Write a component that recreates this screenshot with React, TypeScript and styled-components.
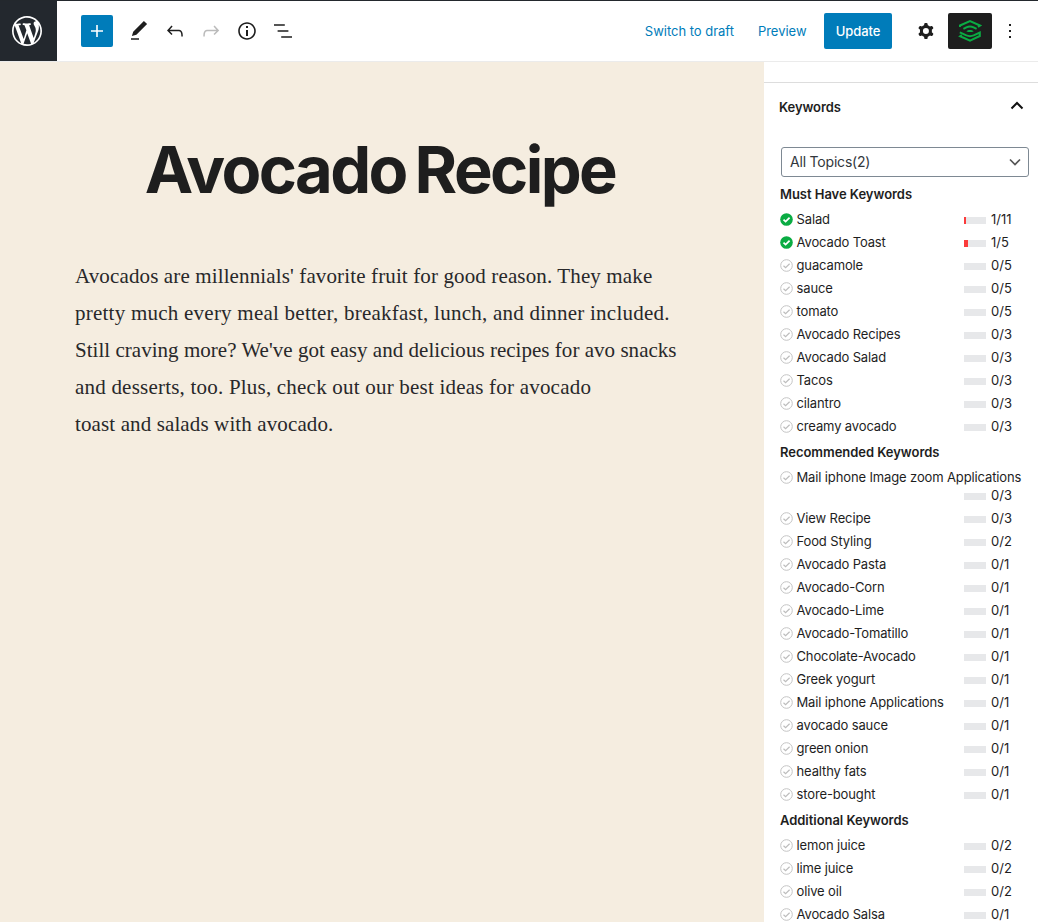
import React from "react";
import styled, { createGlobalStyle } from "styled-components";

const GlobalStyle = createGlobalStyle`
  * { box-sizing: border-box; }
  body { margin: 0; background: #fff; color: #1e1e1e; font-family: Inter, "Liberation Sans", sans-serif; font-size: 13px; }
  button { font: inherit; border: 0; background: none; padding: 0; margin: 0; color: inherit; }
  svg { display: block; flex: none; }
`;

const Shell = styled.div`
  width: 1038px;
  height: 922px;
  overflow: hidden;
  display: flex;
  flex-direction: column;
`;

const TopBar = styled.header`
  height: 62px;
  flex: none;
  display: flex;
  border-top: 1px solid #23282d;
  border-bottom: 1px solid #ebebeb;
`;

const HomeLink = styled.div`
  width: 57px;
  height: 60px;
  background: #23282e;
  padding: 12px 0 0 9px;
  color: #fff;
`;

const Tools = styled.div`
  display: flex;
  align-items: center;
  padding-left: 24px;
  gap: 12px;
`;

const AddButton = styled.button`
  width: 32px;
  height: 32px;
  display: grid;
  place-items: center;
  background: #007cba;
  color: #fff;
  border-radius: 2px;
  margin-right: 2px;
`;

const ToolButton = styled.button<{ $muted?: boolean }>`
  width: 24px;
  height: 24px;
  color: ${(p) => (p.$muted ? "#bbb" : "#1e1e1e")};
`;

const Actions = styled.div`
  margin-left: auto;
  display: flex;
  align-items: center;
  padding-right: 16px;
`;

const TextAction = styled.button<{ $gap: number }>`
  color: #007cba;
  line-height: 20px;
  white-space: nowrap;
  letter-spacing: -0.02px;
  margin-right: ${(p) => p.$gap}px;
`;

const UpdateButton = styled.button`
  width: 68px;
  height: 36px;
  border-radius: 2px;
  background: #007cba;
  color: #fff;
  font-weight: 500;
  letter-spacing: -0.05px;
  margin-right: 22px;
`;

const PluginButton = styled.button`
  width: 44px;
  height: 36px;
  margin: 0 6px 0 10px;
  border-radius: 2px;
  background: #1e1e1e;
  display: grid;
  place-items: center;
`;

const Body = styled.div`
  flex: 1;
  min-height: 0;
  display: flex;
`;

const Canvas = styled.main`
  width: 764px;
  background: #f5ede0;
  padding: 69px 75px 0;
`;

const Title = styled.h1`
  margin: 0 0 50px;
  padding-right: 4px;
  height: 77px;
  font-size: 65px;
  line-height: 77px;
  font-weight: 700;
  letter-spacing: -2.6px;
  word-spacing: -4px;
  text-align: center;
  white-space: nowrap;
`;

const Paragraph = styled.p`
  margin: 0;
  font-family: "Liberation Serif", serif;
  font-size: 21px;
  line-height: 37px;
  color: #28282a;
`;

const Line = styled.span<{ $spacing: number }>`
  display: block;
  white-space: nowrap;
  letter-spacing: ${(p) => p.$spacing}px;
`;

const Sidebar = styled.aside`
  width: 274px;
  overflow: hidden;
  padding-top: 20px;
`;

const PanelHeader = styled.div`
  height: 49px;
  border-top: 1px solid #ddd;
  display: flex;
  align-items: center;
  justify-content: space-between;
  padding: 0 14px 0 15px;
  font-weight: 600;
  letter-spacing: -0.08px;

  svg { margin-bottom: 2px; }
`;

const PanelBody = styled.div`
  padding: 16px 9px 0 16px;
`;

const Select = styled.div`
  height: 30px;
  margin: 0 0 3px 1px;
  border: 1px solid #7e8993;
  border-radius: 3px;
  display: flex;
  align-items: center;
  justify-content: space-between;
  padding: 0 7px 1px 8px;
  font-size: 14px;
  color: #32373c;
  letter-spacing: -0.2px;

  svg { margin-top: 1px; }
`;

const GroupTitle = styled.h3`
  margin: 0;
  padding: 4px 0;
  font-size: 13px;
  line-height: 20px;
  font-weight: 600;
  letter-spacing: -0.04px;
`;

const KeywordList = styled.ul`
  list-style: none;
  margin: 0;
  padding: 0;
`;

const KeywordRow = styled.li`
  width: 243px;
  display: flex;
  flex-wrap: wrap;
  justify-content: flex-end;
  padding: 2px 0 3px;
  line-height: 18px;
`;

const Keyword = styled.div`
  flex: 1 0 184px;
  min-width: max-content;
  display: flex;
  align-items: center;
  gap: 3.5px;
  white-space: nowrap;
  letter-spacing: -0.13px;
`;

const Score = styled.div`
  width: 59px;
  display: flex;
  align-items: center;
  gap: 5px;
`;

const Meter = styled.div`
  width: 22px;
  height: 7px;
  margin-top: 2px;
  background: #e7e8ea;
`;

const MeterFill = styled.div`
  height: 7px;
  background: #fb3b3b;
`;

const paths = {
  plus: "M18 11.2h-5.2V6h-1.6v5.2H6v1.6h5.2V18h1.6v-5.2H18z",
  pencil: "M20.1 5.1L16.9 2 6.2 12.7l-1.3 4.4 4.5-1.3L20.1 5.1zM4 20.8h8v-1.5H4v1.5z",
  undo: "M18.3 11.7c-.6-.6-1.4-.9-2.3-.9H6.7l2.9-3.3-1.1-1-4.5 5L8.5 16l1-1-2.7-2.7H16c.5 0 .9.2 1.3.5 1 1 1 3.4 1 4.5v.3h1.5v-.2c0-1.5 0-4.3-1.5-5.7z",
  redo: "M15.6 6.5l-1.1 1 2.9 3.3H8c-.9 0-1.7.3-2.3.9-1.4 1.5-1.4 4.2-1.4 5.6v.2h1.5v-.3c0-1.1 0-3.5 1-4.5.3-.3.7-.5 1.3-.5h9.2L14.5 15l1.1 1.1 4.6-4.6-4.6-5z",
  info: "M12 3.2c-4.8 0-8.8 3.9-8.8 8.8 0 4.8 3.9 8.8 8.8 8.8 4.8 0 8.8-3.9 8.8-8.8 0-4.8-4-8.8-8.8-8.8zm0 16c-4 0-7.2-3.3-7.2-7.2C4.8 8 8 4.8 12 4.8s7.2 3.3 7.2 7.2c0 4-3.2 7.2-7.2 7.2zM11 17h2v-6h-2v6zm0-8h2V7h-2v2z",
  outline: "M13.8 5.2H3v1.5h10.8V5.2zm-3.6 12v1.5H21v-1.5H10.2zm7.2-6H6.6v1.5h10.8v-1.5z",
  cog: "M10.289 4.836A1 1 0 0111.275 4h1.306a1 1 0 01.987.836l.244 1.466c.787.26 1.503.679 2.108 1.218l1.393-.522a1 1 0 011.216.437l.653 1.13a1 1 0 01-.23 1.273l-1.148.944a6.025 6.025 0 010 2.435l1.149.946a1 1 0 01.23 1.272l-.653 1.13a1 1 0 01-1.216.437l-1.394-.522c-.605.54-1.32.958-2.108 1.218l-.244 1.466a1 1 0 01-.987.836h-1.306a1 1 0 01-.986-.836l-.244-1.466a5.995 5.995 0 01-2.108-1.218l-1.394.522a1 1 0 01-1.217-.436l-.653-1.131a1 1 0 01.23-1.272l1.149-.946a6.026 6.026 0 010-2.435l-1.148-.944a1 1 0 01-.23-1.272l.653-1.131a1 1 0 011.217-.437l1.393.522a5.994 5.994 0 012.108-1.218l.244-1.466zM14.929 12a3 3 0 11-6 0 3 3 0 016 0z",
  more: "M13 19h-2v-2h2v2zm0-6h-2v-2h2v2zm0-6h-2V5h2v2z",
};

const Icon = ({ name }: { name: keyof typeof paths }) => (
  <svg width="24" height="24" viewBox="0 0 24 24" fill="currentColor">
    <path fillRule="evenodd" clipRule="evenodd" d={paths[name]} />
  </svg>
);

const WordPressLogo = () => (
  <svg width="36" height="36" viewBox="-2 -2 24 24" fill="currentColor">
    <path d="M20 10c0-5.51-4.49-10-10-10C4.48 0 0 4.49 0 10c0 5.52 4.48 10 10 10 5.51 0 10-4.48 10-10zM7.78 15.37L4.37 6.22c.55-.02 1.17-.08 1.17-.08.5-.06.44-1.13-.06-1.11 0 0-1.45.11-2.37.11-.18 0-.37 0-.58-.01C4.12 2.69 6.87 1.11 10 1.11c2.33 0 4.45.87 6.05 2.34-.68-.11-1.65.39-1.65 1.58 0 .74.45 1.36.9 2.1.35.61.55 1.36.55 2.46 0 1.49-1.4 5-1.4 5l-3.03-8.37c.54-.02.82-.17.82-.17.5-.05.44-1.25-.06-1.22 0 0-1.44.12-2.38.12-.87 0-2.33-.12-2.33-.12-.5-.03-.56 1.2-.06 1.22l.92.08 1.26 3.41zM17.41 10c.24-.64.74-1.87.43-4.25.7 1.29 1.05 2.71 1.05 4.25 0 3.29-1.73 6.24-4.4 7.78.97-2.59 1.94-5.2 2.92-7.78zM6.1 18.09C3.12 16.65 1.11 13.53 1.11 10c0-1.3.23-2.48.72-3.59C3.25 10.3 4.67 14.2 6.1 18.09zm4.03-6.63l2.58 6.98c-.86.29-1.76.45-2.71.45-.79 0-1.57-.11-2.29-.33.81-2.38 1.62-4.74 2.42-7.1z" />
  </svg>
);

const PluginLogo = () => (
  <svg width="24" height="24" viewBox="0 0 24 24" fill="none" stroke="#0aac43" strokeWidth="2">
    <path d="M2 7.9V6.5L12 2.1l10 4.4-2 1.3" />
    <path d="M5.4 9.8l3-1.5c2.4-1.1 4.800-1.1 7.200 0l3 1.500" />
    <path d="M8.400 12.200c1.800-1.500 5.400-1.500 7.200 0-1.800 1.200-5.400 1.200-7.200 0z" fill="#0aac43" stroke="none" />
    <path d="M1.800 13.400l6.600 3c2.400 1 4.800 1 7.200 0l6.200-2.800v3.400L12 21.600 2.200 17.200l1.600-1.100" />
  </svg>
);

const StatusIcon = ({ done }: { done: boolean }) => (
  <svg width="13" height="13" viewBox="0 0 13 13" fill="none">
    <circle cx="6.5" cy="6.5" r={done ? 6.3 : 5.8} fill={done ? "#0aac43" : "none"} stroke={done ? "none" : "#c4c4c4"} />
    <path d="M3.5 6.7l2.1 1.9 4-3.9" stroke={done ? "#fff" : "#bdbdbd"} strokeWidth={done ? 1.8 : 1.2} />
  </svg>
);

type Item = [name: string, found: number, target: number];

const groups: { title: string; items: Item[] }[] = [
  {
    title: "Must Have Keywords",
    items: [
      ["Salad", 1, 11], ["Avocado Toast", 1, 5], ["guacamole", 0, 5], ["sauce", 0, 5], ["tomato", 0, 5],
      ["Avocado Recipes", 0, 3], ["Avocado Salad", 0, 3], ["Tacos", 0, 3], ["cilantro", 0, 3], ["creamy avocado", 0, 3],
    ],
  },
  {
    title: "Recommended Keywords",
    items: [
      ["Mail iphone Image zoom Applications", 0, 3], ["View Recipe", 0, 3], ["Food Styling", 0, 2],
      ["Avocado Pasta", 0, 1], ["Avocado-Corn", 0, 1], ["Avocado-Lime", 0, 1], ["Avocado-Tomatillo", 0, 1],
      ["Chocolate-Avocado", 0, 1], ["Greek yogurt", 0, 1], ["Mail iphone Applications", 0, 1],
      ["avocado sauce", 0, 1], ["green onion", 0, 1], ["healthy fats", 0, 1], ["store-bought", 0, 1],
    ],
  },
  {
    title: "Additional Keywords",
    items: [["lemon juice", 0, 2], ["lime juice", 0, 2], ["olive oil", 0, 2], ["Avocado Salsa", 0, 1]],
  },
];

const lines: [string, number][] = [
  ["Avocados are millennials' favorite fruit for good reason. They make", 0.13],
  ["pretty much every meal better, breakfast, lunch, and dinner included.", 0.24],
  ["Still craving more? We've got easy and delicious recipes for avo snacks", 0.03],
  ["and desserts, too. Plus, check out our best ideas for avocado", 0.21],
  ["toast and salads with avocado.", 0.12],
];

export default function App() {
  return (
    <Shell>
      <GlobalStyle />
      <TopBar>
        <HomeLink><WordPressLogo /></HomeLink>
        <Tools>
          <AddButton><Icon name="plus" /></AddButton>
          <ToolButton><Icon name="pencil" /></ToolButton>
          <ToolButton><Icon name="undo" /></ToolButton>
          <ToolButton $muted><Icon name="redo" /></ToolButton>
          <ToolButton><Icon name="info" /></ToolButton>
          <ToolButton><Icon name="outline" /></ToolButton>
        </Tools>
        <Actions>
          <TextAction $gap={24}>Switch to draft</TextAction>
          <TextAction $gap={17.5}>Preview</TextAction>
          <UpdateButton>Update</UpdateButton>
          <ToolButton><Icon name="cog" /></ToolButton>
          <PluginButton><PluginLogo /></PluginButton>
          <ToolButton><Icon name="more" /></ToolButton>
        </Actions>
      </TopBar>
      <Body>
        <Canvas>
          <Title>Avocado Recipe</Title>
          <Paragraph>
            {lines.map(([text, spacing]) => <Line key={text} $spacing={spacing}>{text}</Line>)}
          </Paragraph>
        </Canvas>
        <Sidebar>
          <PanelHeader>
            Keywords
            <svg width="14" height="10" viewBox="0 0 14 10" fill="none" stroke="#111" strokeWidth="2">
              <path d="M1.5 7.5L7 2l5.5 5.5" />
            </svg>
          </PanelHeader>
          <PanelBody>
            <Select>
              All Topics(2)
              <svg width="12" height="8" viewBox="0 0 12 8" fill="none" stroke="#555" strokeWidth="1.7">
                <path d="M1 1.5l5 5 5-5" />
              </svg>
            </Select>
            {groups.map((group) => (
              <section key={group.title}>
                <GroupTitle>{group.title}</GroupTitle>
                <KeywordList>
                  {group.items.map(([name, found, target]) => (
                    <KeywordRow key={name}>
                      <Keyword><StatusIcon done={found > 0} />{name}</Keyword>
                      <Score>
                        <Meter><MeterFill style={{ width: `${(found / target) * 100}%` }} /></Meter>
                        {found}/{target}
                      </Score>
                    </KeywordRow>
                  ))}
                </KeywordList>
              </section>
            ))}
          </PanelBody>
        </Sidebar>
      </Body>
    </Shell>
  );
}
